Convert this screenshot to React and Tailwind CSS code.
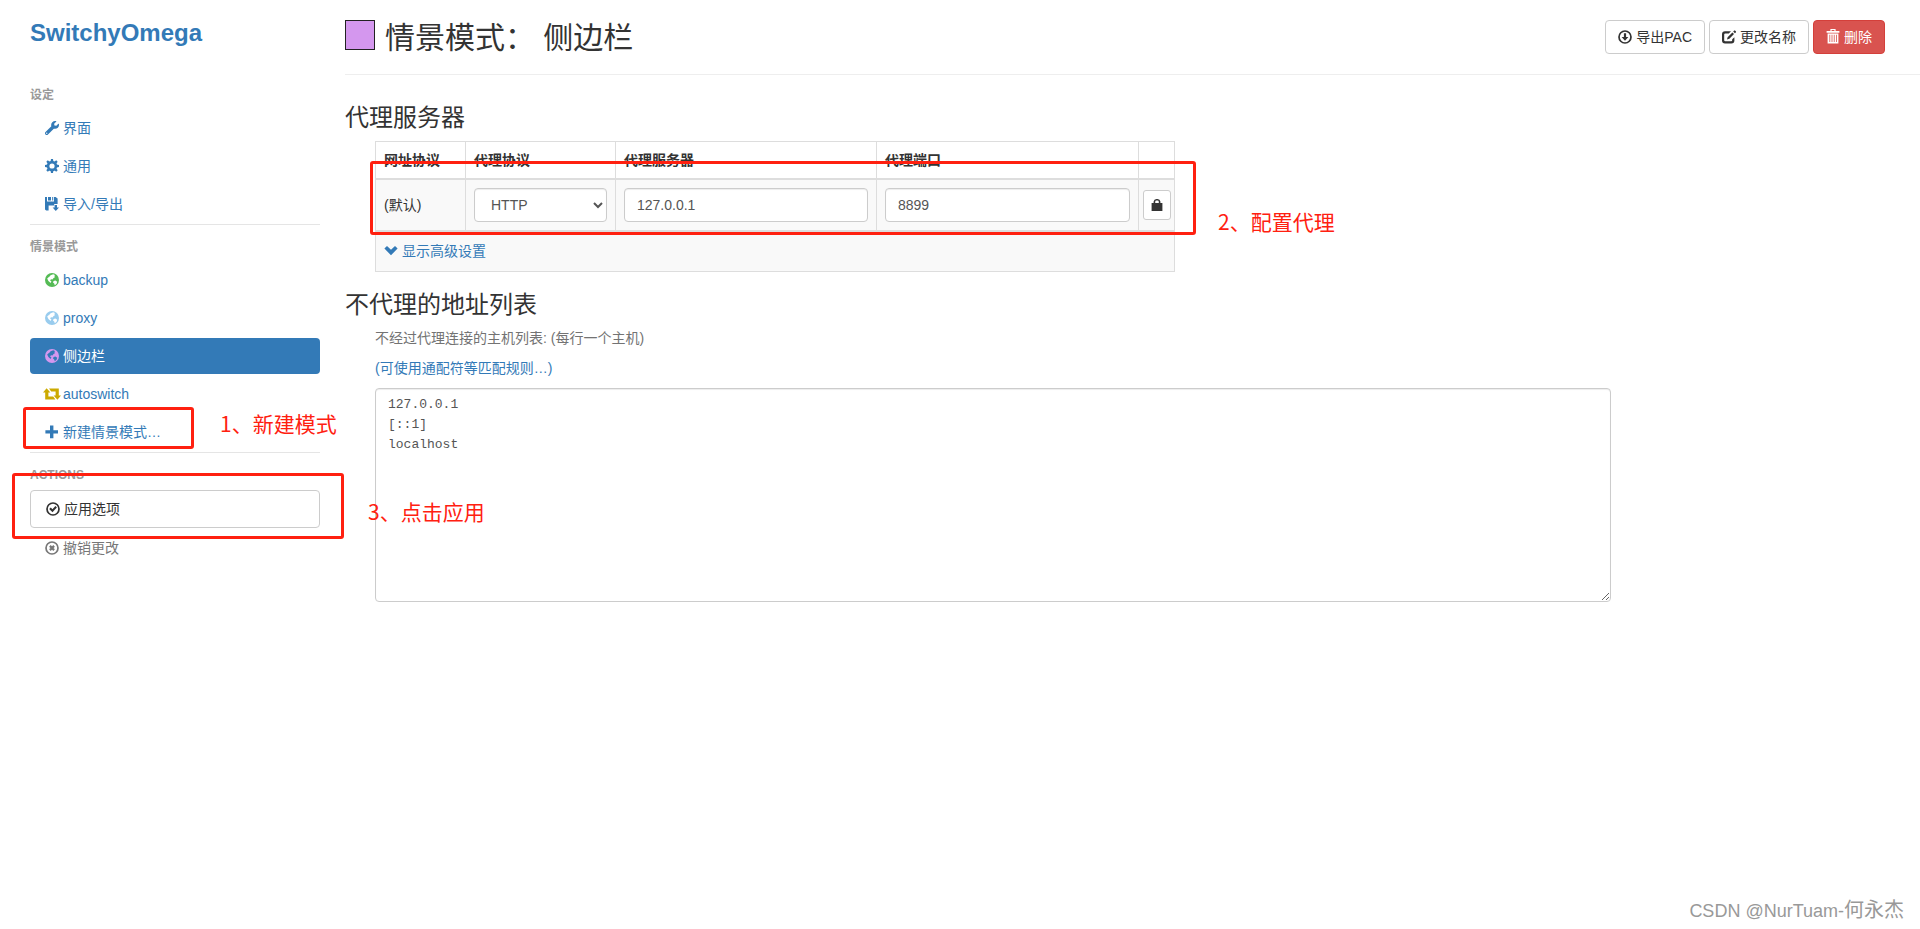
import React from "react";
import { FaWrench } from "react-icons/fa";

function Icon({ children, className = "" }) {
  return (
    <svg
      viewBox="0 0 14 14"
      fill="currentColor"
      aria-hidden="true"
      className={"h-[14px] w-[14px] shrink-0 overflow-visible " + className}
    >
      {children}
    </svg>
  );
}

const CogIcon = () => (
  <Icon>
    <circle cx="7" cy="7" r="3.9" fill="none" stroke="currentColor" strokeWidth="2.6" />
    {[0, 45, 90, 135, 180, 225, 270, 315].map((a) => (
      <path key={a} d="M5.6 2.4 L6 0 H8 L8.4 2.4Z" transform={`rotate(${a} 7 7)`} />
    ))}
  </Icon>
);

const SaveIcon = () => (
  <Icon>
    <path d="M0 0H2V4.4H9V0H10.6L12.6 1.6V7H9.2V8.6H3.6V13.4H1.2L0 12.4Z" />
    <path d="M3 0H6V3.4H3ZM7.2 0H8.2V3.4H7.2Z" />
    <path d="M9.6 8H12V10.4H14L10.8 14L7.6 10.4H9.6Z" />
  </Icon>
);

const GlobeIcon = ({ className }) => (
  <Icon className={className}>
    <path
      fillRule="evenodd"
      d="M7 0A7 7 0 1 1 7 14A7 7 0 1 1 7 0ZM5.6 2.2L8.2 1.3L10 2.1L9.2 3.2L10.2 4L8.6 5.1L7.4 6.6L6 6.2L5 7.4L6.4 8.2L5.6 10L3.4 8L2.2 5.6L3.6 4.2L4.6 3.6ZM8.6 8L10.4 7.6L12.2 8.8L11.6 10.8L9.8 12.2L9.2 10.4L8 9.6Z"
    />
  </Icon>
);

const RetweetIcon = ({ className }) => (
  <Icon className={className}>
    <path d="M1.6 1.2L5.4 5.6H3.4V9.6H8.2L10.4 12.4H0.2V5.6H-2Z" />
    <path d="M12.4 12.8L8.6 8.4H10.6V4.4H6.2L4 1.6H13.8V8.4H16Z" />
  </Icon>
);

const PlusIcon = () => (
  <Icon>
    <path d="M5 0.6H8.4V5.2H13V8.6H8.4V13.2H5V8.6H0.4V5.2H5Z" />
  </Icon>
);

const OkCircleIcon = () => (
  <Icon>
    <circle cx="7" cy="7" r="6" fill="none" stroke="currentColor" strokeWidth="1.7" />
    <path d="M3.2 7L4.8 5.6L6.4 7.2L9.4 4L10.9 5.4L6.5 10.2Z" />
  </Icon>
);

const RemoveCircleIcon = () => (
  <Icon>
    <circle cx="7" cy="7" r="6" fill="none" stroke="currentColor" strokeWidth="1.7" />
    <path d="M4.9 4.9L9.1 9.1M9.1 4.9L4.9 9.1" stroke="currentColor" strokeWidth="2.2" />
  </Icon>
);

const DownloadIcon = () => (
  <Icon>
    <circle cx="7" cy="7" r="6" fill="none" stroke="currentColor" strokeWidth="1.7" />
    <path d="M5.9 3.2H8.1V7H10.4L7 10.8L3.6 7H5.9Z" />
  </Icon>
);

const EditIcon = () => (
  <Icon>
    <path d="M9 1.2H3A3 3 0 0 0 0 4.2V10.4A3 3 0 0 0 3 13.4H9.4A3 3 0 0 0 12.4 10.4V7.2L10.2 9.2V10.2A1 1 0 0 1 9.2 11.2H3.2A1 1 0 0 1 2.2 10.2V4.4A1 1 0 0 1 3.2 3.4H6.8Z" />
    <path d="M10.4 2.4L12 4L7.4 8.8L5 9.6L5.6 7.2ZM11.2 1.6L12.2 0.6H13L14 1.6V2.2L12.9 3.2Z" />
  </Icon>
);

const TrashIcon = () => (
  <Icon>
    <path
      fillRule="evenodd"
      d="M4.4 1V-1H9.6V1H13.4V2.8H0.6V1ZM5.6 0.1V1H8.4V0.1ZM1.6 3.6H12.4V13.6H1.6ZM3.4 4.8V12H4.2V4.8ZM5.6 4.8V12H6.4V4.8ZM7.8 4.8V12H8.6V4.8ZM10 4.8V12H10.8V4.8Z"
    />
  </Icon>
);

const LockIcon = () => (
  <Icon>
    <path
      fillRule="evenodd"
      d="M3.6 5V3.6A3 3 0 0 1 6.6 1H7.4A3 3 0 0 1 10.4 3.6V5H12.4V13H1.6V5ZM5.2 5H8.8V3.8A1.3 1.3 0 0 0 7.5 2.6H6.5A1.3 1.3 0 0 0 5.2 3.8Z"
    />
  </Icon>
);

const ChevronIcon = () => (
  <Icon>
    <path d="M0.4 4.6L3 2L7 5.8L11 2L13.6 4.6L7 11.2Z" />
  </Icon>
);

function NavItem({ icon, children, active = false, muted = false }) {
  const tone = active
    ? "bg-[#337ab7] text-white"
    : muted
      ? "text-[#777777]"
      : "text-[#337ab7]";
  return (
    <a href="#" className={"flex h-9 items-center gap-1 rounded px-[15px] " + tone}>
      {icon}
      <span>{children}</span>
    </a>
  );
}

const NavHeader = ({ children }) => (
  <h2 className="flex h-[37px] items-center pt-1.5 text-xs font-bold text-[#999999]">
    {children}
  </h2>
);

const NavList = ({ children }) => <div className="flex flex-col gap-0.5">{children}</div>;

const Divider = () => <hr className="mt-0.5 border-t border-[#e5e5e5]" />;

const Frame = ({ className }) => (
  <div
    className={"pointer-events-none absolute rounded-[3px] border-3 border-[#ff2010] " + className}
  />
);

const Note = ({ className, children }) => (
  <div
    className={
      "pointer-events-none absolute font-['Noto_Sans_CJK_SC',sans-serif] text-[21px] leading-7 whitespace-nowrap text-[#ff2010] " +
      className
    }
  >
    {children}
  </div>
);

const inputClass =
  "block h-[34px] w-full rounded border border-[#cccccc] bg-white px-3 text-sm text-[#555555] shadow-[inset_0_1px_1px_rgba(0,0,0,0.075)]";
const buttonClass =
  "flex h-[34px] items-center gap-1 rounded border px-3 whitespace-nowrap";

function Sidebar() {
  return (
    <nav className="w-[290px] shrink-0">
      <div className="pt-[17px] pb-6 text-2xl leading-8 font-bold text-[#337ab7]">
        <a href="#">SwitchyOmega</a>
      </div>
      <NavHeader>设定</NavHeader>
      <NavList>
        <NavItem icon={<FaWrench className="h-[14px] w-[14px] shrink-0" />}>界面</NavItem>
        <NavItem icon={<CogIcon />}>通用</NavItem>
        <NavItem icon={<SaveIcon />}>导入/导出</NavItem>
      </NavList>
      <Divider />
      <NavHeader>情景模式</NavHeader>
      <NavList>
        <NavItem icon={<GlobeIcon className="text-[#55bb55]" />}>backup</NavItem>
        <NavItem icon={<GlobeIcon className="text-[#99ccee]" />}>proxy</NavItem>
        <NavItem active icon={<GlobeIcon className="text-[#d497ee]" />}>
          侧边栏
        </NavItem>
        <NavItem icon={<RetweetIcon className="text-[#ccaa00]" />}>autoswitch</NavItem>
        <div className="relative">
          <NavItem icon={<PlusIcon />}>新建情景模式…</NavItem>
          <Frame className="-top-[7px] -left-[7px] h-[42px] w-[171px]" />
          <Note className="-top-[5px] left-[190px]">1、新建模式</Note>
        </div>
      </NavList>
      <Divider />
      <NavHeader>ACTIONS</NavHeader>
      <NavList>
        <div className="relative">
          <button
            type="button"
            className="flex h-[38px] w-full items-center gap-1 rounded border border-[#cccccc] bg-white px-[15px] text-[#333333]"
          >
            <OkCircleIcon />
            <span>应用选项</span>
          </button>
          <Frame className="-top-[17px] -left-[18px] h-[66px] w-[332px]" />
          <Note className="top-[7px] left-[338px] z-10">3、点击应用</Note>
        </div>
        <NavItem muted icon={<RemoveCircleIcon />}>
          撤销更改
        </NavItem>
      </NavList>
    </nav>
  );
}

function ProxyTable() {
  const cell = "border border-[#dddddd] px-2";
  return (
    <div className="relative w-[800px]">
      <table className="w-full table-fixed border-collapse text-left">
        <colgroup>
          <col className="w-[90px]" />
          <col className="w-[150px]" />
          <col className="w-[261px]" />
          <col />
          <col className="w-9" />
        </colgroup>
        <thead>
          <tr className="h-[37px]">
            <th className={cell}>网址协议</th>
            <th className={cell}>代理协议</th>
            <th className={cell}>代理服务器</th>
            <th className={cell}>代理端口</th>
            <td className={cell}></td>
          </tr>
        </thead>
        <tbody className="border-t-2 border-[#dddddd] bg-[#f9f9f9]">
          <tr className="h-[52px]">
            <td className={cell}>(默认)</td>
            <td className={cell}>
              <select aria-label="代理协议" defaultValue="HTTP" className={inputClass}>
                <option>HTTP</option>
                <option>HTTPS</option>
                <option>SOCKS4</option>
                <option>SOCKS5</option>
              </select>
            </td>
            <td className={cell}>
              <input aria-label="代理服务器" defaultValue="127.0.0.1" className={inputClass} />
            </td>
            <td className={cell}>
              <input aria-label="代理端口" defaultValue="8899" className={inputClass} />
            </td>
            <td className="border border-[#dddddd]">
              <button
                type="button"
                aria-label="代理登录"
                className="mx-auto flex h-[30px] w-7 items-center justify-center rounded-[3px] border border-[#cccccc] bg-white text-[#333333]"
              >
                <LockIcon />
              </button>
            </td>
          </tr>
        </tbody>
        <tbody className="border-t-2 border-[#dddddd] bg-[#f9f9f9]">
          <tr className="h-[41px]">
            <td colSpan={5} className={cell}>
              <a href="#" className="flex items-center gap-1 text-[#337ab7]">
                <ChevronIcon />
                <span>显示高级设置</span>
              </a>
            </td>
          </tr>
        </tbody>
      </table>
      <Frame className="top-[20px] -left-[5px] h-[74px] w-[826px]" />
      <Note className="top-[66px] left-[843px]">2、配置代理</Note>
    </div>
  );
}

export default function App() {
  return (
    <div
      lang="zh-CN"
      className="relative flex min-h-screen gap-[25px] bg-white pl-[30px] font-['Liberation_Sans','Noto_Sans_CJK_SC',sans-serif] text-sm leading-5 text-[#333333]"
    >
      <Sidebar />
      <main className="min-w-0 flex-1">
        <header className="flex h-[75px] items-start justify-between border-b border-[#eeeeee] pt-5 pr-[35px]">
          <div className="flex gap-2.5">
            <span className="h-[30px] w-[30px] border border-[#222222] bg-[#d497ee]" />
            <h1 className="text-3xl leading-9">情景模式： 侧边栏</h1>
          </div>
          <div className="flex gap-1">
            <button type="button" className={buttonClass + " border-[#cccccc] bg-white"}>
              <DownloadIcon />
              导出PAC
            </button>
            <button type="button" className={buttonClass + " border-[#cccccc] bg-white"}>
              <EditIcon />
              更改名称
            </button>
            <button
              type="button"
              className={buttonClass + " border-[#d43f3a] bg-[#d9534f] text-white"}
            >
              <TrashIcon />
              删除
            </button>
          </div>
        </header>

        <section className="pt-7">
          <h3 className="text-2xl leading-[30px]">代理服务器</h3>
          <div className="mt-2 pl-[30px]">
            <ProxyTable />
          </div>
        </section>

        <section className="pt-[18px]">
          <h3 className="text-2xl leading-[30px]">不代理的地址列表</h3>
          <div className="pl-[30px]">
            <label htmlFor="bypass" className="mt-2 block text-[#737373]">
              不经过代理连接的主机列表: (每行一个主机)
            </label>
            <p className="mt-2.5">
              <a href="#" className="text-[#337ab7]">
                (可使用通配符等匹配规则…)
              </a>
            </p>
            <textarea
              id="bypass"
              rows={10}
              spellCheck={false}
              defaultValue={"127.0.0.1\n[::1]\nlocalhost"}
              className="mt-2.5 block h-[214px] w-[80%] rounded border border-[#cccccc] bg-white px-3 py-1.5 font-['Liberation_Mono',monospace] text-[13px] leading-5 text-[#555555] shadow-[inset_0_1px_1px_rgba(0,0,0,0.075)]"
            />
          </div>
        </section>
      </main>
      <div className="pointer-events-none absolute right-4 bottom-1 text-xl leading-7 text-[#999999]">
        <span className="text-lg">CSDN @NurTuam-</span>何永杰
      </div>
    </div>
  );
}
